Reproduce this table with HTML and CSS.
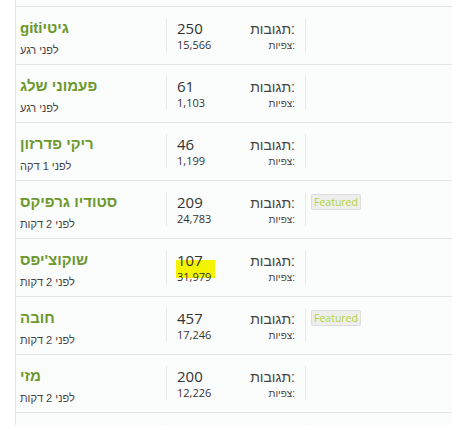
FILE: index.html
```html
<!DOCTYPE html>
<html lang="he">
<head>
<meta charset="utf-8">
<link rel="stylesheet" href="styles.css">
</head>
<body>
<div class="list">
  <div class="row">
    <div class="title-cell" dir="rtl"><a class="title">גיטיgiti</a><div class="time">לפני רגע</div></div>
    <div class="stats-cell"><div class="line big"><span class="num">250</span><span class="lbl">תגובות:</span></div><div class="line small"><span class="num">15,566</span><span class="lbl">צפיות:</span></div></div>
    <div class="badge-cell"></div>
  </div>
  <div class="row">
    <div class="title-cell" dir="rtl"><a class="title">פעמוני שלג</a><div class="time">לפני רגע</div></div>
    <div class="stats-cell"><div class="line big"><span class="num">61</span><span class="lbl">תגובות:</span></div><div class="line small"><span class="num">1,103</span><span class="lbl">צפיות:</span></div></div>
    <div class="badge-cell"></div>
  </div>
  <div class="row">
    <div class="title-cell" dir="rtl"><a class="title">ריקי פדרזון</a><div class="time">לפני 1 דקה</div></div>
    <div class="stats-cell"><div class="line big"><span class="num">46</span><span class="lbl">תגובות:</span></div><div class="line small"><span class="num">1,199</span><span class="lbl">צפיות:</span></div></div>
    <div class="badge-cell"></div>
  </div>
  <div class="row">
    <div class="title-cell" dir="rtl"><a class="title">סטודיו גרפיקס</a><div class="time">לפני 2 דקות</div></div>
    <div class="stats-cell"><div class="line big"><span class="num">209</span><span class="lbl">תגובות:</span></div><div class="line small"><span class="num">24,783</span><span class="lbl">צפיות:</span></div></div>
    <div class="badge-cell"><span class="badge">Featured</span></div>
  </div>
  <div class="row">
    <div class="title-cell" dir="rtl"><a class="title">שוקוצ'יפס</a><div class="time">לפני 2 דקות</div></div>
    <div class="stats-cell"><span class="marker"></span><div class="line big"><span class="num">107</span><span class="lbl">תגובות:</span></div><div class="line small"><span class="num">31,979</span><span class="lbl">צפיות:</span></div></div>
    <div class="badge-cell"></div>
  </div>
  <div class="row">
    <div class="title-cell" dir="rtl"><a class="title">חובה</a><div class="time">לפני 2 דקות</div></div>
    <div class="stats-cell"><div class="line big"><span class="num">457</span><span class="lbl">תגובות:</span></div><div class="line small"><span class="num">17,246</span><span class="lbl">צפיות:</span></div></div>
    <div class="badge-cell"><span class="badge">Featured</span></div>
  </div>
  <div class="row">
    <div class="title-cell" dir="rtl"><a class="title">מזי</a><div class="time">לפני 2 דקות</div></div>
    <div class="stats-cell"><div class="line big"><span class="num">200</span><span class="lbl">תגובות:</span></div><div class="line small"><span class="num">12,226</span><span class="lbl">צפיות:</span></div></div>
    <div class="badge-cell"></div>
  </div>
  <div class="row row-partial">
    <div class="title-cell"></div>
    <div class="stats-cell"></div>
    <div class="badge-cell"></div>
  </div>
</div>
</body>
</html>
```

FILE: styles.css
```css
html, body {
  margin: 0;
  padding: 0;
  background: #ffffff;
  height: 425px;
  overflow: hidden;
}

.list {
  margin-left: 15px;
  border-left: 1px solid #e6e6e6;
  background: #fbfcfc;
  padding-top: 6px;
  height: 419px;
  overflow: hidden;
}

.row {
  display: flex;
  height: 57px;
  border-top: 1px solid #e3e3e3;
}

.title-cell {
  width: 146px;
  padding-left: 4px;
  text-align: left;
  padding-top: 12px;
}

.title {
  display: block;
  font-family: "Liberation Sans", Arial, sans-serif;
  font-weight: bold;
  font-size: 15px;
  line-height: 18px;
  color: #6c982c;
}

.time {
  font-family: "Liberation Sans", Arial, sans-serif;
  font-size: 11px;
  line-height: 14px;
  margin-top: 6px;
  color: #444444;
}

.stats-cell {
  position: relative;
  width: 118px;
  margin: 11px 0 12px;
  padding: 0 10px;
  border-left: 1px solid #ebebeb;
  height: 34px;
}

.marker {
  position: absolute;
  left: 9px;
  top: 10px;
  width: 39px;
  height: 18px;
  background: #f4f400;
}

.line {
  position: relative;
  display: flex;
  justify-content: space-between;
  align-items: baseline;
}

.line.big {
  margin-top: 2px;
  height: 17px;
}

.line.small {
  margin-top: 1px;
  height: 14px;
}

.num {
  font-family: "Open Sans", sans-serif;
  color: #333333;
}

.big .num {
  font-size: 15px;
  line-height: 17px;
}

.small .num {
  font-size: 11px;
  line-height: 14px;
}

.lbl {
  font-family: "Liberation Sans", Arial, sans-serif;
  color: #444444;
}

.big .lbl {
  font-size: 14px;
  line-height: 17px;
}

.small .lbl {
  font-size: 10px;
  line-height: 14px;
}

.badge-cell {
  flex: 1;
  margin: 11px 0 12px;
  padding-left: 5px;
  border-left: 1px solid #ebebeb;
  height: 34px;
}

.badge {
  display: inline-block;
  margin-top: 1px;
  padding: 0 2px;
  height: 14px;
  line-height: 14px;
  font-family: "Open Sans", sans-serif;
  font-size: 10.5px;
  color: #b2d43a;
  background: #eeeeee;
  border: 1px solid #dddddd;
  border-radius: 2px;
}
```
